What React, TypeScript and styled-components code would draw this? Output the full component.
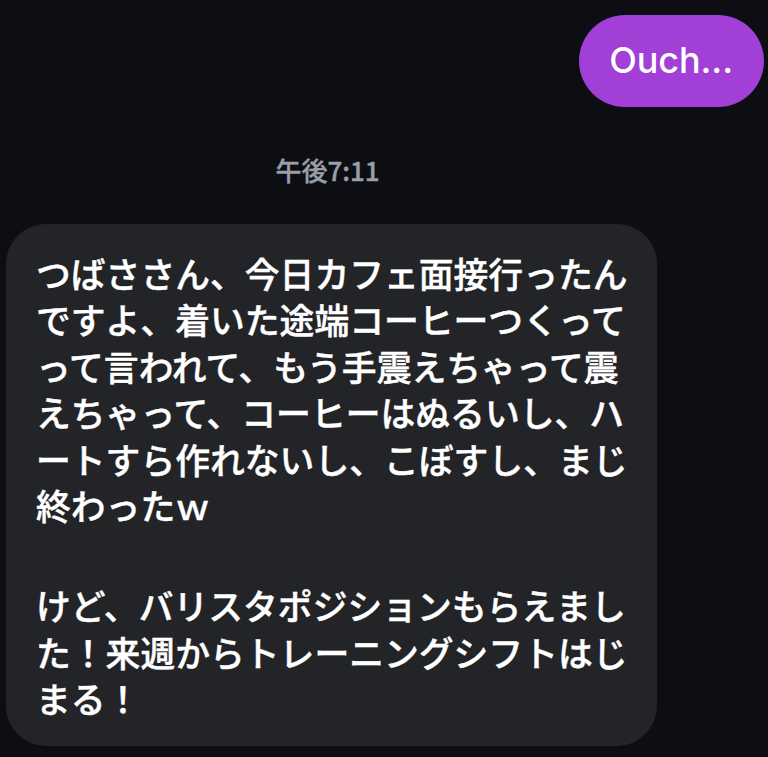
import React from "react";
import styled, { createGlobalStyle } from "styled-components";

const Global = createGlobalStyle`
  html, body {
    margin: 0;
    padding: 0;
    background: #0c0e13;
  }
  body {
    font-family: "Noto Sans CJK JP", "Noto Sans", sans-serif;
    -webkit-font-smoothing: antialiased;
  }
`;

const Page = styled.div`
  width: 768px;
  height: 757px;
  box-sizing: border-box;
  padding: 15px 4px 0 6px;
  display: flex;
  flex-direction: column;
  overflow: hidden;
`;

const OutRow = styled.div`
  display: flex;
  justify-content: flex-end;
`;

const OutBubble = styled.div`
  height: 92px;
  box-sizing: border-box;
  padding: 0 31px 2px 30px;
  border-radius: 46px;
  background: #a13fd6;
  color: #ffffff;
  display: flex;
  align-items: center;
  font-family: "Inter", "Liberation Sans", sans-serif;
  font-weight: 500;
  font-size: 36px;
  letter-spacing: -0.1px;
`;

const Stamp = styled.div`
  width: 651px;
  margin: 50px 0 41px;
  padding-right: 8px;
  box-sizing: border-box;
  text-align: center;
  line-height: 26px;
  font-size: 26px;
  font-weight: 500;
  color: #9a9ea7;
  font-family: "Noto Sans CJK JP", sans-serif;
  -webkit-text-stroke: 0.4px #9a9ea7;
`;

const InBubble = styled.div`
  width: 651px;
  box-sizing: border-box;
  padding: 26px 0 24px 30px;
  border-radius: 40px;
  background: #222428;
  color: #ffffff;
  display: flex;
  flex-direction: column;
  gap: 54px;
`;

const Para = styled.div`
  font-family: "Noto Sans CJK JP", sans-serif;
  font-weight: 500;
  font-size: 34.8px;
  line-height: 46.4px;
  white-space: pre;
  -webkit-text-stroke: 0.45px #ffffff;
`;

const paragraphs = [
  [
    "つばささん、今日カフェ面接行ったん",
    "ですよ、着いた途端コーヒーつくって",
    "って言われて、もう手震えちゃって震",
    "えちゃって、コーヒーはぬるいし、ハ",
    "ートすら作れないし、こぼすし、まじ",
    "終わったｗ",
  ],
  [
    "けど、バリスタポジションもらえまし",
    "た！来週からトレーニングシフトはじ",
    "まる！",
  ],
];

export default function App() {
  return (
    <>
      <Global />
      <Page>
        <OutRow>
          <OutBubble>Ouch...</OutBubble>
        </OutRow>
        <Stamp>午後7:11</Stamp>
        <InBubble>
          {paragraphs.map((lines, i) => (
            <Para key={i}>{lines.join("\n")}</Para>
          ))}
        </InBubble>
      </Page>
    </>
  );
}
